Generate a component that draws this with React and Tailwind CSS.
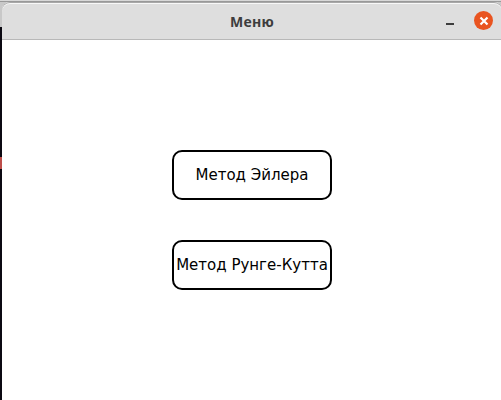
function MethodButton({ children }) {
  return (
    <button className="flex h-[50px] w-40 items-center justify-center whitespace-nowrap rounded-[10px] border-2 border-black bg-white pt-px text-[15px] leading-none text-black font-['DejaVu_Sans',sans-serif]">
      {children}
    </button>
  );
}

function TitleBar() {
  return (
    <header className="grid h-[38px] shrink-0 grid-cols-[1fr_auto_1fr] items-center rounded-t-[8px] border-b border-b-[#b8b8b8] bg-[#dedede] shadow-[inset_0_1px_0_#a8a8a8,inset_0_2px_0_#f8f8f8]">
      <span />
      <h1 className="pt-[2px] text-[14px] leading-none font-bold tracking-[0.2px] text-[#3d3d3d] font-['Open_Sans',sans-serif]">Меню</h1>
      <div className="flex items-center justify-end gap-[20px] pr-[9px]">
        <button aria-label="Свернуть" className="mt-[6px] h-[2px] w-[8px] bg-[#3d3d3d]" />
        <button aria-label="Закрыть" className="flex size-[19px] items-center justify-center rounded-full bg-[#e95420]">
          <svg viewBox="0 0 10 10" className="size-[10px]" fill="none" stroke="white" strokeWidth="2.2">
            <path d="M1.5 1.5 8.5 8.5M8.5 1.5 1.5 8.5" />
          </svg>
        </button>
      </div>
    </header>
  );
}

export default function App() {
  return (
    <div className="flex h-[400px] w-[501px] overflow-hidden bg-[linear-gradient(#d8d8d8_0_1px,#999_1px_2px,#c8c8c8_2px_27px,#0b0912_27px_157px,#bd4d4a_157px_169px,#0b0912_169px)] pt-[2px] pl-[2px]">
      <main className="flex w-[500px] shrink-0 flex-col rounded-t-[8px] bg-white">
        <TitleBar />
        <section className="flex grow flex-col items-center gap-10 pt-[110px]">
          <MethodButton>Метод Эйлера</MethodButton>
          <MethodButton>Метод Рунге-Кутта</MethodButton>
        </section>
      </main>
    </div>
  );
}
